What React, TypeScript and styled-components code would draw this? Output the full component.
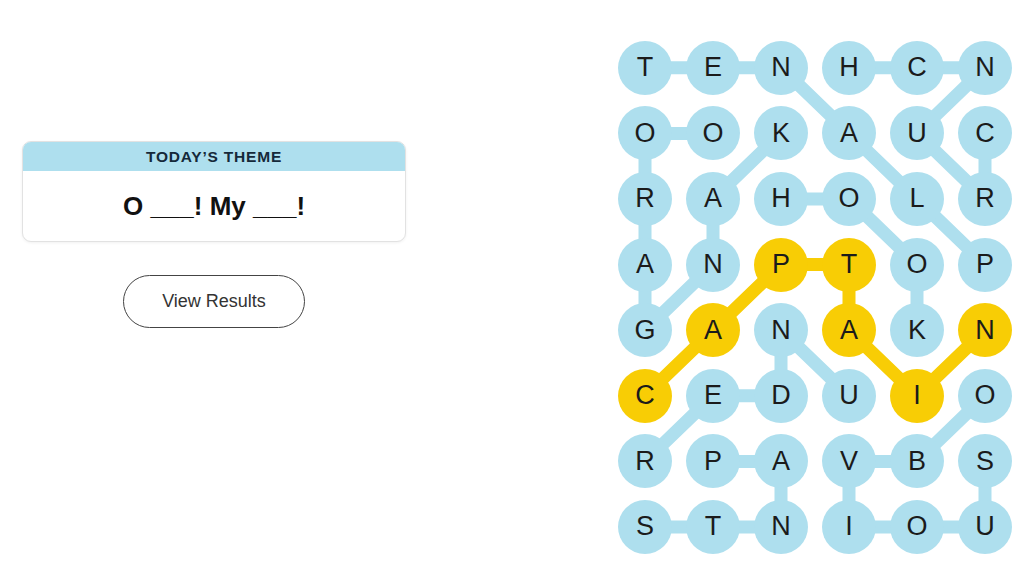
import styled, { createGlobalStyle } from 'styled-components'

const GlobalStyle = createGlobalStyle`
  html, body {
    margin: 0;
    padding: 0;
    background: #ffffff;
    font-family: "Liberation Sans", Arial, sans-serif;
  }
`

const LETTERS = [
  'TENHCN',
  'OOKAUC',
  'RAHOLR',
  'ANPTOP',
  'GANAKN',
  'CEDUIO',
  'RPAVBS',
  'STNIOU',
]

const COL_W = 68
const ROW_H = 65.6
const BLUE = '#aedfee'
const GOLD = '#f8cd05'

type Pt = [number, number]

// words found so far, as chains of [col, row]
const FOUND: Pt[][] = [
  [[0, 0], [1, 0], [2, 0], [3, 1], [4, 2], [5, 3]],
  [[3, 0], [4, 0], [5, 0], [4, 1], [5, 2], [5, 1]],
  [[2, 1], [1, 2], [1, 3], [0, 4], [0, 3], [0, 2], [0, 1], [1, 1]],
  [[2, 2], [3, 2], [4, 3], [4, 4]],
  [[3, 5], [2, 4], [2, 5], [1, 5], [0, 6]],
  [[1, 6], [2, 6], [2, 7], [1, 7], [0, 7]],
  [[5, 5], [4, 6], [3, 6], [3, 7], [4, 7], [5, 7], [5, 6]],
]

const SPANGRAM: Pt[] = [[0, 5], [1, 4], [2, 3], [3, 3], [3, 4], [4, 5], [5, 4]]

const spangramKeys = new Set(SPANGRAM.map(([c, r]) => `${c},${r}`))

const cx = (c: number) => c * COL_W + COL_W / 2
const cy = (r: number) => r * ROW_H + ROW_H / 2

function Chain({ pts, color }: { pts: Pt[]; color: string }) {
  return (
    <polyline
      points={pts.map(([c, r]) => `${cx(c)},${cy(r)}`).join(' ')}
      fill="none"
      stroke={color}
      strokeWidth={13}
      strokeLinejoin="round"
      strokeLinecap="round"
    />
  )
}

export default function App() {
  return (
    <Page>
      <GlobalStyle />
      <LeftPanel>
        <ThemeCard>
          <ThemeHeader>TODAY’S THEME</ThemeHeader>
          <ThemeBody>O ___! My ___!</ThemeBody>
        </ThemeCard>
        <ResultsButton>View Results</ResultsButton>
      </LeftPanel>

      <Board>
        <Links viewBox={`0 0 ${COL_W * 6} ${ROW_H * 8}`}>
          {FOUND.map((w, i) => (
            <Chain key={i} pts={w} color={BLUE} />
          ))}
          <Chain pts={SPANGRAM} color={GOLD} />
        </Links>
        {LETTERS.map((row, r) =>
          row.split('').map((ch, c) => (
            <Cell key={`${c}-${r}`}>
              <Tile $gold={spangramKeys.has(`${c},${r}`)}>{ch}</Tile>
            </Cell>
          ))
        )}
      </Board>
    </Page>
  )
}

const Page = styled.div`
  display: flex;
  width: 1024px;
  height: 576px;
  overflow: hidden;
`

const LeftPanel = styled.div`
  width: 382px;
  margin-left: 23px;
  padding-top: 141px;
  display: flex;
  flex-direction: column;
  align-items: center;
`

const ThemeCard = styled.div`
  width: 100%;
  border: 1px solid #e2e2e2;
  border-radius: 9px;
  overflow: hidden;
  box-shadow: 0 1px 3px rgba(0, 0, 0, 0.06);
  background: #fff;
`

const ThemeHeader = styled.div`
  height: 29px;
  background: ${BLUE};
  color: #15293a;
  font-size: 15.5px;
  font-weight: 700;
  letter-spacing: 0.8px;
  display: flex;
  align-items: center;
  justify-content: center;
`

const ThemeBody = styled.div`
  height: 70px;
  display: flex;
  align-items: center;
  justify-content: center;
  font-size: 26px;
  font-weight: 700;
  color: #111;
`

const ResultsButton = styled.button`
  margin-top: 33px;
  width: 182px;
  height: 53px;
  border-radius: 27px;
  border: 1.5px solid #444;
  background: #fff;
  color: #333;
  font-family: "Liberation Sans", Arial, sans-serif;
  font-size: 18px;
  cursor: pointer;
`

const Board = styled.div`
  position: relative;
  margin-left: 206px;
  margin-top: 35px;
  width: ${COL_W * 6}px;
  height: ${ROW_H * 8}px;
  display: grid;
  grid-template-columns: repeat(6, ${COL_W}px);
  grid-template-rows: repeat(8, ${ROW_H}px);
`

const Links = styled.svg`
  position: absolute;
  inset: 0;
  width: 100%;
  height: 100%;
  z-index: 0;
`

const Cell = styled.div`
  position: relative;
  z-index: 1;
  display: flex;
  align-items: center;
  justify-content: center;
`

const Tile = styled.div<{ $gold: boolean }>`
  width: 54px;
  height: 54px;
  border-radius: 50%;
  background: ${({ $gold }) => ($gold ? GOLD : BLUE)};
  color: #1b1b1b;
  font-size: 27px;
  display: flex;
  align-items: center;
  justify-content: center;
`
